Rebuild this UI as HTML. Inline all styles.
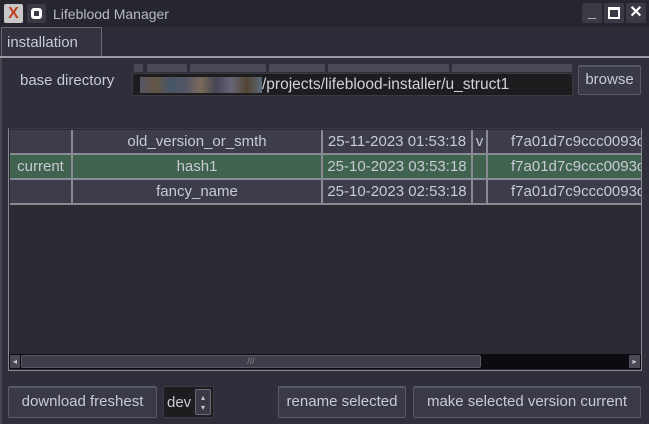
<!DOCTYPE html>
<html><head><style>
*{box-sizing:border-box;margin:0;padding:0}
body{width:649px;height:424px;background:#2f2f3b;font-family:"Liberation Sans",sans-serif;font-size:15px;color:#c8cad4;position:relative;overflow:hidden}
.a{position:absolute}
.btn{position:absolute;background:#3a3a47;border:1px solid #5a5a66;border-radius:2px;text-align:center;color:#c8cad4;box-shadow:inset 0 1px 0 #55556a}
.cell{position:absolute;height:25px;line-height:24px;text-align:center;background:#3c3c4b;border-right:2px solid #8a8a94;border-bottom:2px solid #8a8a94;white-space:nowrap;overflow:hidden}
.g{background:#40634f}
</style></head><body>
<div class="a" style="left:0;top:0;width:649px;height:27px;background:#26262e"></div>
<div class="a" style="left:4px;top:4px;width:19px;height:19px;background:#c8c8c8;border-radius:2px;color:#c04020;font-size:16px;line-height:19px;text-align:center;font-weight:bold">X</div>
<div class="a" style="left:27px;top:4px;width:19px;height:19px;background:#3a3a44;border-radius:2px"><div class="a" style="left:4px;top:4px;width:11px;height:11px;border:3px solid #fff;border-radius:3px"></div></div>
<div class="a" style="left:53px;top:6px;font-size:14px;color:#b8bac4">Lifeblood Manager</div>
<div class="a" style="left:582px;top:3px;width:20px;height:20px;background:#3a3a44;border-radius:2px;color:#fff;text-align:center;font-weight:bold;line-height:20px">_</div>
<div class="a" style="left:604px;top:3px;width:20px;height:20px;background:#3a3a44;border-radius:2px"><div class="a" style="left:4px;top:4px;width:12px;height:12px;border:2px solid #fff;border-top-width:3px"></div></div>
<div class="a" style="left:626px;top:3px;width:20px;height:20px;background:#3a3a44;border-radius:2px;color:#fff;text-align:center;font-weight:bold;line-height:20px;font-size:16px">✕</div>
<div class="a" style="left:0;top:27px;width:649px;height:30px;background:#2c2c38"></div>
<div class="a" style="left:1px;top:27px;width:101px;height:30px;background:#33333f;border:1px solid #6a6a74;border-bottom:none;padding:6px 0 0 5px;font-size:15px">installation</div>
<div class="a" style="left:0;top:56px;width:649px;height:2px;background:#9a9aa4"></div>
<div class="a" style="left:0;top:58px;width:2px;height:366px;background:#45454f"></div>
<div class="a" style="left:20px;top:72px;font-size:15px">base directory</div>
<div class="a" style="left:134px;top:64px;width:9px;height:8px;background:#4a4a56;border-radius:2px 2px 0 0"></div>
<div class="a" style="left:147px;top:64px;width:40px;height:8px;background:#4a4a56;border-radius:2px 2px 0 0"></div>
<div class="a" style="left:190px;top:64px;width:76px;height:8px;background:#4a4a56;border-radius:2px 2px 0 0"></div>
<div class="a" style="left:269px;top:64px;width:56px;height:8px;background:#4a4a56;border-radius:2px 2px 0 0"></div>
<div class="a" style="left:328px;top:64px;width:121px;height:8px;background:#4a4a56;border-radius:2px 2px 0 0"></div>
<div class="a" style="left:452px;top:64px;width:120px;height:8px;background:#4a4a56;border-radius:2px 2px 0 0"></div>
<div class="a" style="left:132px;top:73px;width:441px;height:23px;background:#1d1d20;border-radius:2px;border:1px solid #3a3a40"></div>
<div class="a" style="left:140px;top:77px;width:122px;height:16px;background:linear-gradient(90deg,#556,#665544,#445566,#556,#7a6a5a,#445,#667,#554433,#5a6a7a)"></div>
<div class="a" style="left:262px;top:76px;font-size:15.5px;color:#d0d2dc">/projects/lifeblood-installer/u_struct1</div>
<div class="btn" style="left:578px;top:65px;width:63px;height:30px;line-height:27px;font-size:15px">browse</div>
<div class="a" style="left:8px;top:128px;width:634px;height:243px;background:#2a2a33;border:1px solid #8a8a94;border-top:1px solid #3a3a44"></div>
<div class="cell" style="left:10px;top:130px;width:63px"></div>
<div class="cell" style="left:73px;top:130px;width:250px">old_version_or_smth</div>
<div class="cell" style="left:323px;top:130px;width:150px">25-11-2023 01:53:18</div>
<div class="cell" style="left:473px;top:130px;width:15px">v</div>
<div class="cell" style="left:488px;top:130px;width:153px;border-right:none;text-align:left;padding-left:23px">f7a01d7c9ccc0093d</div>
<div class="cell g" style="left:10px;top:155px;width:63px">current</div>
<div class="cell g" style="left:73px;top:155px;width:250px">hash1</div>
<div class="cell g" style="left:323px;top:155px;width:150px">25-10-2023 03:53:18</div>
<div class="cell g" style="left:473px;top:155px;width:15px"></div>
<div class="cell g" style="left:488px;top:155px;width:153px;border-right:none;text-align:left;padding-left:23px">f7a01d7c9ccc0093d</div>
<div class="cell" style="left:10px;top:180px;width:63px"></div>
<div class="cell" style="left:73px;top:180px;width:250px">fancy_name</div>
<div class="cell" style="left:323px;top:180px;width:150px">25-10-2023 02:53:18</div>
<div class="cell" style="left:473px;top:180px;width:15px"></div>
<div class="cell" style="left:488px;top:180px;width:153px;border-right:none;text-align:left;padding-left:23px">f7a01d7c9ccc0093d</div>
<div class="a" style="left:9px;top:354px;width:632px;height:15px;background:#0c0c10"></div>
<div class="a" style="left:10px;top:355px;width:10px;height:13px;background:#4a4a56;color:#ccc;font-size:8px;line-height:13px;text-align:center">◂</div>
<div class="a" style="left:21px;top:355px;width:460px;height:13px;background:#3e3e4a;border:1px solid #5a5a66;border-radius:2px;text-align:center;font-size:9px;line-height:11px;color:#888">///</div>
<div class="a" style="left:629px;top:355px;width:11px;height:13px;background:#4a4a56;color:#ccc;font-size:8px;line-height:13px;text-align:center">▸</div>
<div class="btn" style="left:8px;top:386px;width:149px;height:32px;line-height:30px">download freshest</div>
<div class="a" style="left:163px;top:386px;width:51px;height:32px;background:#1d1d20;border:1px solid #3a3a44;border-radius:2px;padding:7px 0 0 3px;color:#c8cad4">dev</div>
<div class="a" style="left:195px;top:389px;width:16px;height:26px;background:#3a3a47;border:1px solid #6a6a74;border-radius:2px;font-size:8px;color:#ccc;text-align:center;line-height:10px;padding-top:3px">▴<br>▾</div>
<div class="btn" style="left:278px;top:386px;width:128px;height:32px;line-height:30px">rename selected</div>
<div class="btn" style="left:413px;top:386px;width:228px;height:32px;line-height:30px">make selected version current</div>
</body></html>
